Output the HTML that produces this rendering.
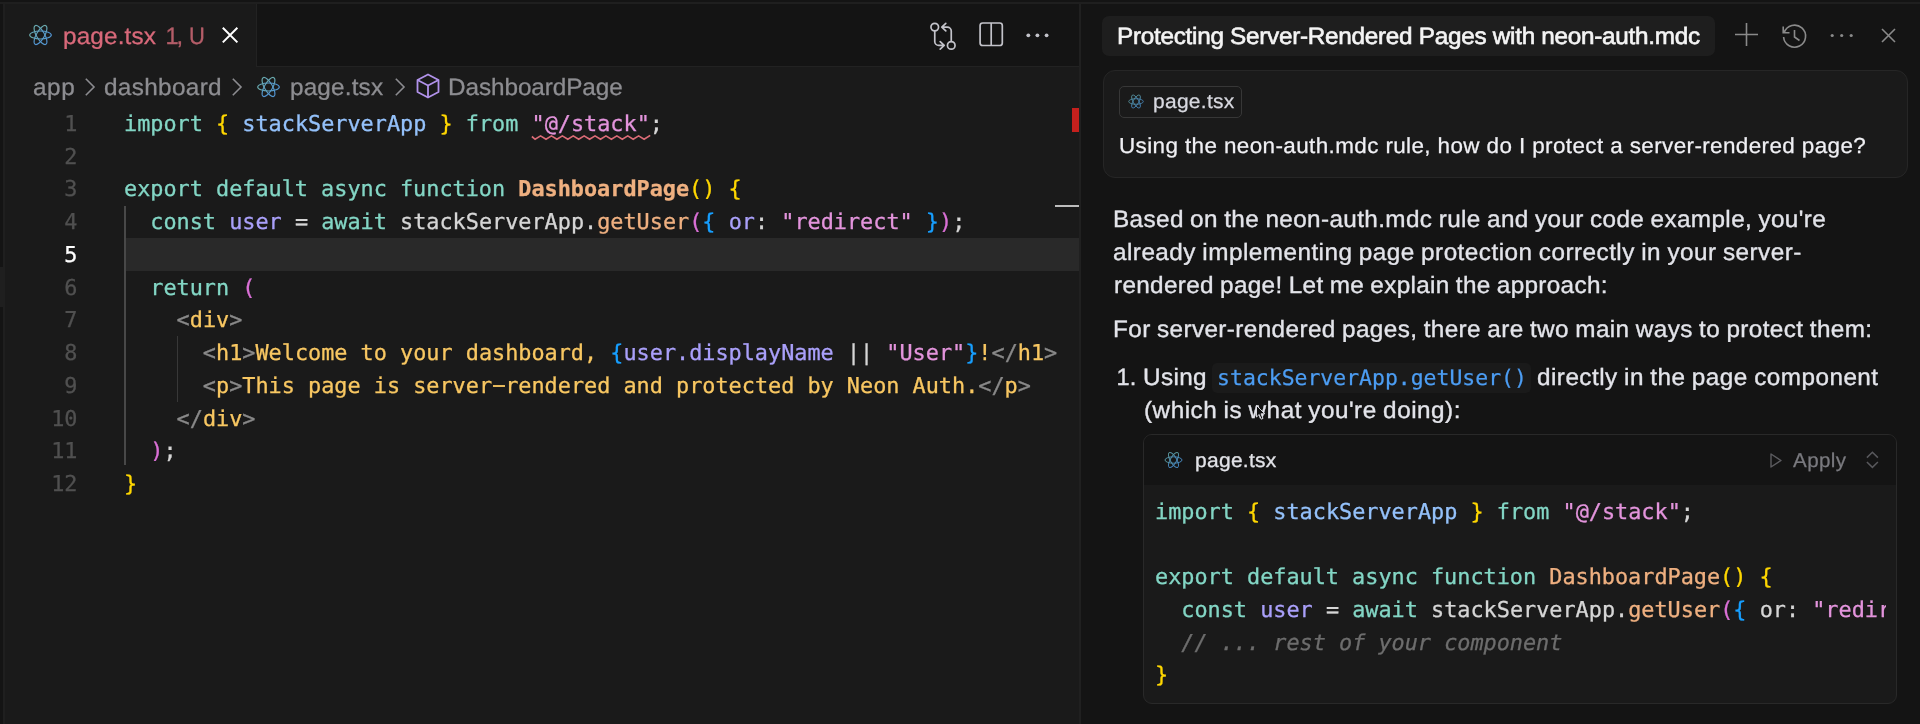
<!DOCTYPE html>
<html lang="en">
<head>
<meta charset="utf-8">
<title>page.tsx</title>
<style>
*{box-sizing:border-box;margin:0;padding:0}
html,body{width:1920px;height:724px;overflow:hidden;background:#141414}
body{position:relative;font-family:"Liberation Sans",sans-serif;color:#d6d6d6;-webkit-font-smoothing:antialiased}
.abs{position:absolute}
.t{position:absolute;white-space:pre;line-height:1;text-rendering:geometricPrecision}
.mono{font-family:"DejaVu Sans Mono","Liberation Mono",monospace;text-rendering:geometricPrecision}
/* ---------- editor ---------- */
#topline{left:0;top:2px;width:1920px;height:2px;background:#1f1f1f}
#leftstrip{left:0;top:4px;width:3px;height:720px;background:#141414}
#leftsel{left:0;top:267px;width:3px;height:40px;background:#1f1f1f}
#leftline{left:3px;top:4px;width:2px;height:720px;background:#1f1f1f}
#editor{left:4px;top:4px;width:1076px;height:720px;background:#1a1a1a}
#tabbar{left:257px;top:4px;width:823px;height:62px;background:#141414}
#tabbarline{left:256px;top:66px;width:824px;height:1px;background:#222}
#tabright{left:256px;top:4px;width:1px;height:62px;background:#222}
.tab{font-size:23px;-webkit-text-stroke:.3px}
.bc{font-size:23px;color:#8d8d91;-webkit-text-stroke:.3px #8d8d91;word-spacing:-.8px}
#hl{left:126px;top:238px;width:953px;height:33px;background:#292929}
.ln{-webkit-text-stroke:.3px;position:absolute;left:31px;width:46.5px;text-align:right;font-size:21.84px;line-height:32.73px;height:32.73px;color:#505050}
.ln.cur{color:#fff}
.cl{-webkit-text-stroke:.3px;position:absolute;left:124px;font-size:21.84px;line-height:32.73px;height:32.73px;white-space:pre;color:#d6d6d6}
.k{color:#83d6c5}.v{color:#94c1fa}.s{color:#e394dc}.f{color:#efb080}.fb{color:#efb080;font-weight:bold}
.b1{color:#ffd700}.b2{color:#da70d6}.b3{color:#179fff}.p{color:#aaa0fa}.g{color:#898989}.y{color:#f8c762}.w{color:#d6d6d6}
.c{color:#6d6d6d;font-style:italic}
.hy{display:inline-block;transform:translate(.3px,-.8px) scaleX(2.05)}
.guide{position:absolute;width:2px;background:#484848}
.guide2{position:absolute;width:1px;background:#383838}
/* ---------- chat ---------- */
#chat{left:1080px;top:4px;width:840px;height:720px;background:#141414}
#chatline{left:1079px;top:4px;width:2px;height:720px;background:#202020}
#title{left:1102px;top:15.6px;width:612.6px;height:40px;background:#1e1e1e;border-radius:7px}
#ubox{left:1103px;top:70px;width:805px;height:108px;background:#1a1a1a;border:1px solid #262626;border-radius:12px}
#chip{left:1119px;top:86px;width:123px;height:32px;border:1px solid #373737;border-radius:5px;background:#1a1a1a}
.msg{font-size:23px;color:#e3e4ea;-webkit-text-stroke:.35px #e3e4ea;word-spacing:-.8px}
#inl{left:1212px;top:362.6px;width:318.5px;height:30px;background:#1a1a1a;border-radius:5px}
#cb{left:1143px;top:434px;width:754px;height:270px;background:#1a1a1a;border:1px solid #292929;border-radius:9px;overflow:hidden}
#cbh{left:0;top:0;width:752px;height:50px;background:#141414}
.cc{-webkit-text-stroke:.3px;position:absolute;left:1155px;font-size:21.84px;line-height:32.73px;height:32.73px;white-space:pre;color:#d6d6d6}
svg{position:absolute;overflow:visible}
</style>
</head>
<body>
<div id="wrap" style="position:absolute;left:0;top:0;width:1920px;height:724px;will-change:transform">
<svg style="left:0;top:0" width="0" height="0"><defs><linearGradient id="rg" gradientUnits="userSpaceOnUse" x1="9" y1="-9" x2="-9" y2="9"><stop offset="0" stop-color="#4a8edb"/><stop offset=".5" stop-color="#5b9dc4"/><stop offset="1" stop-color="#72b09c"/></linearGradient><linearGradient id="rg2" gradientUnits="userSpaceOnUse" x1="7" y1="-7" x2="-7" y2="7"><stop offset="0" stop-color="#3f7fc0"/><stop offset=".5" stop-color="#4b89b0"/><stop offset="1" stop-color="#5f9a8c"/></linearGradient></defs></svg>
<div class="abs" id="editor"></div>
<div class="abs" id="topline"></div>
<div class="abs" id="leftstrip"></div>
<div class="abs" id="leftsel"></div>
<div class="abs" id="leftline"></div>
<div class="abs" id="tabbar"></div>
<div class="abs" id="tabbarline"></div>
<div class="abs" id="tabright"></div>

<!-- tab -->
<svg style="left:29px;top:24px" width="23" height="22" viewBox="-11.5 -11 23 22" fill="none" stroke="url(#rg)" stroke-width="1.15">
<ellipse rx="10.8" ry="4"/><ellipse rx="10.8" ry="4" transform="rotate(60)"/><ellipse rx="10.8" ry="4" transform="rotate(120)"/>
</svg>
<div class="t tab" id="tb1" style="left:62.74px;top:26.00px;color:#d8697a;letter-spacing:0.150px;font-size:23.6px;transform:scale(1.03,1.0);transform-origin:0 84.65%">page.tsx</div>
<div class="t tab" id="tb2" style="left:165.6px;top:26.00px;color:#b45d68;letter-spacing:-2.2px;font-size:23.6px">1,</div>
<div class="t tab" id="tb3" style="left:188.6px;top:26.00px;color:#b45d68;letter-spacing:0px;font-size:23.6px;transform:scaleX(.93);transform-origin:0 50%">U</div>
<svg style="left:221.9px;top:27.2px" width="16.2" height="16.2" viewBox="0 0 16.2 16.2" stroke="#fff" stroke-width="2" fill="none"><path d="M0.8 0.8L15.4 15.4M15.4 0.8L0.8 15.4"/></svg>

<!-- editor actions -->

<svg id="ic-actions" style="left:0;top:0" width="1920" height="80" viewBox="0 0 1920 80" fill="none" stroke="#c3c3ca" stroke-width="1.7" stroke-linecap="round" stroke-linejoin="round">
<circle cx="934.75" cy="27.1" r="3.8"/><circle cx="951.25" cy="45.4" r="3.8"/>
<path d="M934.75 31.2V41.4a4 4 0 0 0 4 4H944M940.2 41.6L944.2 45.4L940.2 49.2"/>
<path d="M951.25 41.3V31.1a4 4 0 0 0-4-4H942M945.8 23.3L941.8 27.1L945.8 30.9"/>
<rect x="980.1" y="23" width="22.2" height="22.5" rx="2.6"/><path d="M991.2 23V45.5" stroke-linecap="butt"/>
<g fill="#c3c3ca" stroke="none"><circle cx="1028.3" cy="35.3" r="1.9"/><circle cx="1037.4" cy="35.3" r="1.9"/><circle cx="1046.6" cy="35.3" r="1.9"/></g>
</svg>
<!-- breadcrumbs -->
<div class="t bc" id="bc1" style="left:32.88px;top:77.00px;letter-spacing:0.532px;font-size:23.6px;transform:scale(1.03,1.0);transform-origin:0 84.65%">app</div>
<svg style="left:85.4px;top:78.2px" width="11" height="19" viewBox="0 0 11 19" fill="none" stroke="#8c8c90" stroke-width="1.6"><path d="M0.8 0.8L9 9L0.8 17.2"/></svg>
<div class="t bc" id="bc2" style="left:103.92px;top:77.00px;letter-spacing:0.331px;font-size:23.6px;transform:scale(1.03,1.0);transform-origin:0 84.65%">dashboard</div>
<svg style="left:231.9px;top:78.2px" width="11" height="19" viewBox="0 0 11 19" fill="none" stroke="#8c8c90" stroke-width="1.6"><path d="M0.8 0.8L9 9L0.8 17.2"/></svg>
<svg style="left:257px;top:76px" width="23" height="22" viewBox="-11.5 -11 23 22" fill="none" stroke="url(#rg)" stroke-width="1.15">
<ellipse rx="10.8" ry="4"/><ellipse rx="10.8" ry="4" transform="rotate(60)"/><ellipse rx="10.8" ry="4" transform="rotate(120)"/>
</svg>
<div class="t bc" id="bc3" style="left:290.24px;top:77.00px;letter-spacing:0.165px;font-size:23.6px;transform:scale(1.03,1.0);transform-origin:0 84.65%">page.tsx</div>
<svg style="left:394.8px;top:78.2px" width="11" height="19" viewBox="0 0 11 19" fill="none" stroke="#8c8c90" stroke-width="1.6"><path d="M0.8 0.8L9 9L0.8 17.2"/></svg>
<svg style="left:416.1px;top:73.4px" width="24" height="26" viewBox="0 0 24 26" fill="none" stroke="#b192ea" stroke-width="1.8" stroke-linejoin="round"><path d="M12 1.5L22.5 7V19L12 24.5L1.5 19V7Z"/><path d="M1.5 7L12 12.5L22.5 7M12 12.5V24.5"/></svg>
<div class="t bc" id="bc4" style="left:447.82px;top:77.00px;letter-spacing:-0.070px;font-size:23.6px;transform:scale(1.03,1.0);transform-origin:0 84.65%">DashboardPage</div>

<!-- code -->
<div class="abs" id="hl"></div>
<div class="guide" style="left:124px;top:205.5px;height:259px"></div>
<div class="guide2" style="left:177px;top:336px;height:66px"></div>

<div class="ln mono" style="top:109.1px">1</div>
<div class="ln mono" style="top:142.1px">2</div>
<div class="ln mono" style="top:174.1px">3</div>
<div class="ln mono" style="top:207.1px">4</div>
<div class="ln mono cur" style="top:240.1px">5</div>
<div class="ln mono" style="top:273.1px">6</div>
<div class="ln mono" style="top:305.1px">7</div>
<div class="ln mono" style="top:338.1px">8</div>
<div class="ln mono" style="top:371.1px">9</div>
<div class="ln mono" style="top:404.1px">10</div>
<div class="ln mono" style="top:436.1px">11</div>
<div class="ln mono" style="top:469.1px">12</div>

<div class="cl mono" style="top:109.1px"><span class="k">import</span> <span class="b1">{</span> <span class="v">stackServerApp</span> <span class="b1">}</span> <span class="k">from</span> <span class="s" id="sq">"@/stack"</span>;</div>
<div class="cl mono" style="top:174.1px"><span class="k">export default async function</span> <span class="fb">DashboardPage</span><span class="b1">()</span> <span class="b1">{</span></div>
<div class="cl mono" style="top:207.1px">  <span class="k">const</span> <span class="p">user</span> = <span class="k">await</span> stackServerApp.<span class="f">getUser</span><span class="b2">(</span><span class="b3">{</span> <span class="p">or</span>: <span class="s">"redirect"</span> <span class="b3">}</span><span class="b2">)</span>;</div>
<div class="cl mono" style="top:273.1px">  <span class="k">return</span> <span class="b2">(</span></div>
<div class="cl mono" style="top:305.1px">    <span class="g">&lt;</span><span class="y">div</span><span class="g">&gt;</span></div>
<div class="cl mono" style="top:338.1px">      <span class="g">&lt;</span><span class="y">h1</span><span class="g">&gt;</span><span class="y">Welcome to your dashboard, </span><span class="b3">{</span><span class="p">user.displayName</span> || <span class="s">"User"</span><span class="b3">}</span><span class="y">!</span><span class="g">&lt;/</span><span class="y">h1</span><span class="g">&gt;</span></div>
<div class="cl mono" style="top:371.1px">      <span class="g">&lt;</span><span class="y">p</span><span class="g">&gt;</span><span class="y">This page is server<span class="hy">-</span>rendered and protected by Neon Auth.</span><span class="g">&lt;/</span><span class="y">p</span><span class="g">&gt;</span></div>
<div class="cl mono" style="top:404.1px">    <span class="g">&lt;/</span><span class="y">div</span><span class="g">&gt;</span></div>
<div class="cl mono" style="top:436.1px">  <span class="b2">)</span>;</div>
<div class="cl mono" style="top:469.1px"><span class="b1">}</span></div>

<!-- squiggle -->
<svg style="left:0;top:0" width="700" height="150" viewBox="0 0 700 150" fill="none" stroke="#d96b76" stroke-width="1.7" stroke-linejoin="miter"><path d="M531.9 136.5L535.1 139.3L540.55 135.9L546.0 139.3L551.45 135.9L556.9 139.3L562.35 135.9L567.8 139.3L573.25 135.9L578.7 139.3L584.15 135.9L589.6 139.3L595.05 135.9L600.5 139.3L605.95 135.9L611.4 139.3L616.85 135.9L622.3 139.3L627.75 135.9L633.2 139.3L638.65 135.9L644.1 139.3L649.55 135.9L650 136.43"/></svg>

<!-- overview ruler -->
<div class="abs" style="left:1071.5px;top:108px;width:7.5px;height:24px;background:#c4201d"></div>
<div class="abs" style="left:1055px;top:204.5px;width:24px;height:2.5px;background:#bdbdbd"></div>

<!-- ================= chat ================= -->
<div class="abs" id="chat"></div>
<div class="abs" id="chatline"></div>
<div class="abs" id="title"></div>
<div class="t" style="left:1117.26px;top:26.00px;font-size:23.6px;letter-spacing:-0.271px;-webkit-text-stroke:.6px #f4f4f4;color:#f4f4f4;transform:scale(1.03,1.0);transform-origin:0 84.65%" id="ttl">Protecting Server-Rendered Pages with neon-auth.mdc</div>

<svg style="left:1733.5px;top:22px" width="25" height="25" viewBox="0 0 25 25" fill="none" stroke="#8a8a8a" stroke-width="1.6"><path d="M12.5 1V24M1 12.5H24"/></svg>
<svg id="ic-hist" style="left:1781px;top:22.5px" width="27" height="27" viewBox="0 0 27 27" fill="none" stroke="#8a8a8a" stroke-width="1.6"><path d="M3.2 9.5A11 11 0 1 1 2.6 14"/><path d="M2.2 3.5V9.8H8.5"/><path d="M13.5 7V14L18.5 17.5"/></svg>
<svg style="left:1830px;top:33px" width="24" height="5" viewBox="0 0 24 5" fill="#8a8a8a"><circle cx="2.2" cy="2.5" r="1.6"/><circle cx="11.7" cy="2.5" r="1.6"/><circle cx="21.2" cy="2.5" r="1.6"/></svg>
<svg style="left:1881px;top:28px" width="15" height="15" viewBox="0 0 15 15" stroke="#8a8a8a" stroke-width="1.6" fill="none"><path d="M1 1L14 14M14 1L1 14"/></svg>

<div class="abs" id="ubox"></div>
<div class="abs" id="chip"></div>
<svg style="left:1128px;top:94px" width="16" height="15" viewBox="-8 -7.5 16 15" fill="none" stroke="url(#rg2)" stroke-width=".85">
<ellipse rx="7.3" ry="2.8"/><ellipse rx="7.3" ry="2.8" transform="rotate(60)"/><ellipse rx="7.3" ry="2.8" transform="rotate(120)"/>
</svg>
<div class="t" id="chipt" style="left:1152.98px;top:92.00px;font-size:20px;letter-spacing:0.258px;color:#d8d9e0;-webkit-text-stroke:.25px #d8d9e0;transform:scale(1.05,1.0);transform-origin:0 84.65%">page.tsx</div>
<div class="t" style="left:1119.12px;top:135.00px;font-size:21.8px;letter-spacing:0.376px;color:#f0f0f4;-webkit-text-stroke:.25px #f0f0f4;transform:scale(1.03,1.0);transform-origin:0 84.65%" id="umsg">Using the neon-auth.mdc rule, how do I protect a server-rendered page?</div>

<div class="t msg" style="left:1112.98px;top:209.00px;letter-spacing:0.364px;font-size:23.6px;transform:scale(1.03,1.0);transform-origin:0 84.65%" id="m1">Based on the neon-auth.mdc rule and your code example, you're</div>
<div class="t msg" style="left:1113.42px;top:242.00px;letter-spacing:0.449px;font-size:23.6px;transform:scale(1.03,1.0);transform-origin:0 84.65%" id="m2">already implementing page protection correctly in your server-</div>
<div class="t msg" style="left:1113.82px;top:275.00px;letter-spacing:0.310px;font-size:23.6px;transform:scale(1.03,1.0);transform-origin:0 84.65%" id="m3">rendered page! Let me explain the approach:</div>
<div class="t msg" style="left:1112.98px;top:319.00px;letter-spacing:0.380px;font-size:23.6px;transform:scale(1.03,1.0);transform-origin:0 84.65%" id="m4">For server-rendered pages, there are two main ways to protect them:</div>
<div class="t msg" style="left:1116.6px;top:367.00px;letter-spacing:0px;font-size:23.6px" id="m5">1.</div>
<div class="t msg" style="left:1142.50px;top:367.00px;letter-spacing:0.365px;font-size:23.6px;transform:scale(1.03,1.0);transform-origin:0 84.65%" id="m5b">Using</div>
<div class="abs" id="inl"></div>
<div class="t mono" style="left:1217.1px;top:367.6px;font-size:21.45px;color:#4c9df3;-webkit-text-stroke:.25px #4c9df3" id="m6">stackServerApp.getUser()</div>
<div class="t msg" style="left:1537.40px;top:367.00px;letter-spacing:0.449px;font-size:23.6px;transform:scale(1.03,1.0);transform-origin:0 84.65%" id="m7">directly in the page component</div>
<div class="t msg" style="left:1144.44px;top:400.00px;letter-spacing:0.480px;font-size:23.6px;transform:scale(1.03,1.0);transform-origin:0 84.65%" id="m8">(which is what you're doing):</div>

<svg style="left:1256.4px;top:405.2px" width="10" height="16" viewBox="0 0 10 16"><path d="M0.5 0.5V12L3.2 9.5L5.2 14.2L7 13.4L5 8.8H8.8Z" fill="#111" stroke="#e8e8ee" stroke-width=".9" stroke-linejoin="round"/></svg>
<div class="abs" id="cb"><div class="abs" id="cbh"></div></div>
<svg style="left:1164.3px;top:450.9px" width="19" height="18" viewBox="-9.5 -9 19 18" fill="none" stroke="url(#rg2)" stroke-width="1">
<ellipse rx="8.5" ry="3.2"/><ellipse rx="8.5" ry="3.2" transform="rotate(60)"/><ellipse rx="8.5" ry="3.2" transform="rotate(120)"/>
</svg>
<div class="t" style="left:1195.06px;top:451.00px;font-size:20px;letter-spacing:0.268px;color:#e2e3e8;-webkit-text-stroke:.3px #e2e3e8;transform:scale(1.05,1.0);transform-origin:0 84.65%" id="cbt">page.tsx</div>
<svg style="left:1770px;top:453px" width="12" height="15" viewBox="0 0 12 15" fill="none" stroke="#5c5c60" stroke-width="1.4" stroke-linejoin="round"><path d="M1 1L11 7.5L1 14Z"/></svg>
<div class="t" style="left:1792.64px;top:451.00px;font-size:20px;letter-spacing:0.379px;color:#7a7a7f;-webkit-text-stroke:.25px #7a7a7f;transform:scale(1.03,1.0);transform-origin:0 84.65%" id="apl">Apply</div>
<svg style="left:0;top:0" width="1920" height="480" viewBox="0 0 1920 480" fill="none" stroke="#58585c" stroke-width="1.5"><path d="M1866.9 457.6L1872.4 452.2L1877.9 457.6M1866.9 462L1872.4 467.4L1877.9 462"/></svg>

<div class="abs" style="left:1144px;top:484px;width:742px;height:219px;overflow:hidden">
<div class="cc mono" style="left:11px;top:13.1px"><span class="k">import</span> <span class="b1">{</span> <span class="v">stackServerApp</span> <span class="b1">}</span> <span class="k">from</span> <span class="s">"@/stack"</span>;</div>
<div class="cc mono" style="left:11px;top:78.1px"><span class="k">export default async function</span> <span class="f">DashboardPage</span><span class="b1">()</span> <span class="b1">{</span></div>
<div class="cc mono" style="left:11px;top:111.1px">  <span class="k">const</span> <span class="p">user</span> = <span class="k">await</span> stackServerApp.<span class="f">getUser</span><span class="b2">(</span><span class="b3">{</span> or: <span class="s">"redirect"</span> <span class="b3">}</span><span class="b2">)</span>;</div>
<div class="cc mono" style="left:11px;top:144.1px">  <span class="c">// ... rest of your component</span></div>
<div class="cc mono" style="left:11px;top:176.1px"><span class="b1">}</span></div>
</div>
</div>
</body>
</html>
